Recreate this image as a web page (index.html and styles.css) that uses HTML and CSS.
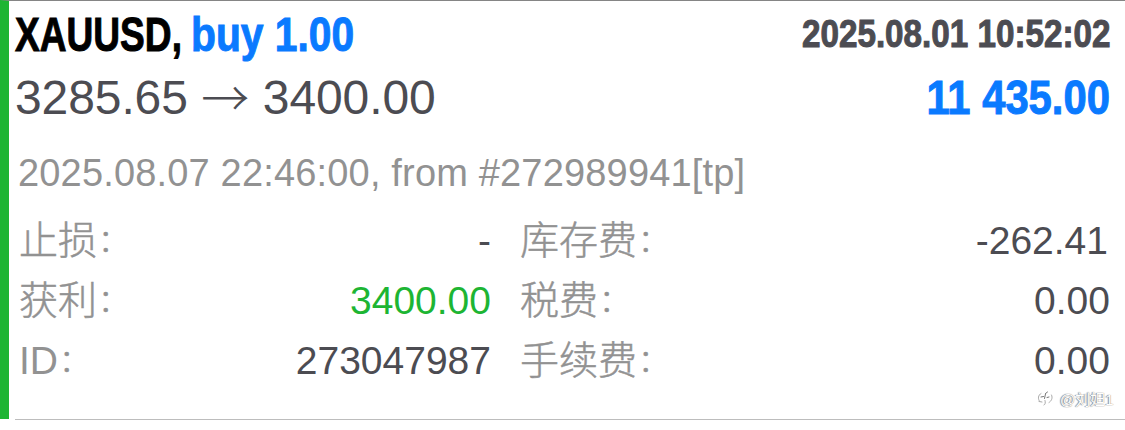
FILE: index.html
```html
<!DOCTYPE html>
<html lang="zh-CN">
<head>
<meta charset="utf-8">
<title>XAUUSD</title>
<link rel="stylesheet" href="styles.css">
</head>
<body>
<main class="deal">
  <header class="line title">
    <div class="name"><span class="symbol">XAUUSD,</span><span class="side">buy 1.00</span></div>
    <time class="closed">2025.08.01 10:52:02</time>
  </header>
  <section class="line prices">
    <div class="move"><span>3285.65</span><span class="arrow">→</span><span>3400.00</span></div>
    <strong class="profit">11 435.00</strong>
  </section>
  <p class="opened">2025.08.07 22:46:00, from #272989941[tp]</p>
  <dl class="details">
    <dt class="left">止损<i>：</i></dt><dd>-</dd><dt class="right">库存费<i>：</i></dt><dd class="swap">-262.41</dd>
    <dt class="left">获利<i>：</i></dt><dd class="target">3400.00</dd><dt class="right">税费<i>：</i></dt><dd>0.00</dd>
    <dt class="left"><span class="latin">ID</span><i>：</i></dt><dd>273047987</dd><dt class="right">手续费<i>：</i></dt><dd>0.00</dd>
  </dl>
</main>
<div class="watermark">
  <svg width="16" height="16" viewBox="0 0 16 16" fill="none" stroke-linecap="round">
    <path d="M4 3.500C1 5 .7 9 2.500 11M14.500 5C16 8 14.500 11 12 12.500M7 15C8.500 14.500 8.500 12.500 8 10.500M2 11.500L5 12" stroke="#aaa"/>
    <path d="M8.500 4L7.500 8.500M4 7L6.500 6.500M10 7.500L12 7M8.500 3.500L10.500 2" stroke="#777"/>
  </svg>
  <span>@刘妲1</span>
</div>
</body>
</html>
```
FILE: styles.css
```css
* { box-sizing: border-box; margin: 0; padding: 0; }
body {
  width: 1125px;
  height: 430px;
  overflow: hidden;
  background: #fff;
  color: #4c4c52;
  font-family: "Liberation Sans", "Noto Sans CJK SC", sans-serif;
  white-space: nowrap;
}
.deal {
  position: relative;
  height: 419px;
  padding: 3px 15px 0 6px;
  border-left: 9px solid #1db533;
  border-top: 1px solid #858585;
}
.deal::after {
  content: "";
  position: absolute;
  left: 6px;
  right: 0;
  bottom: -1px;
  height: 1px;
  background: #bdbdbd;
}
.line { display: flex; justify-content: space-between; }
.title { height: 60px; line-height: 60px; font-weight: 700; }
.name { display: flex; font-size: 49px; }
.symbol, .side, .closed, .profit { -webkit-text-stroke: 1px currentColor; }
.symbol { width: 176px; color: #000; transform: scaleX(.757); transform-origin: left; }
.side { color: #0a7aff; transform: scaleX(.832); transform-origin: left; }
.closed { font-size: 38.5px; line-height: 59px; transform: scaleX(.863); transform-origin: right; }
.prices { height: 68px; line-height: 68px; font-size: 48px; }
.move { display: flex; letter-spacing: -.1px; }
.arrow { width: 75px; line-height: 62px; text-align: center; font-family: "Noto Sans CJK SC", sans-serif; font-weight: 300; }
.profit { color: #0a7aff; transform: scaleX(.87); transform-origin: right; }
.opened { height: 78px; padding-left: 3px; line-height: 82px; font-size: 38px; letter-spacing: .17px; color: #929292; }
.details {
  display: grid;
  grid-template-columns: 120px 356px 192px 427px;
  grid-auto-rows: 60px;
  font-size: 39px;
  line-height: 60px;
}
.details dt { color: #929292; font-weight: 300; line-height: 62px; -webkit-text-stroke: .5px currentColor; }
.details i { margin-left: 1px; font-size: 31px; font-style: normal; line-height: 1; vertical-align: 3px; }
.details .latin { -webkit-text-stroke: 0; }
.left { padding-left: 4px; }
.right { padding-left: 29px; }
.details dd { padding-top: 1px; text-align: right; }
.details .swap { padding-right: 2px; }
.details .target { color: #1db533; }
.watermark {
  position: absolute;
  left: 1037px;
  top: 388px;
  display: flex;
  align-items: center;
  gap: 7px;
  height: 20px;
  color: #fff;
  font-size: 15px;
  text-shadow: -1px 0 1px #888, 0 0 1px #666;
}
```
